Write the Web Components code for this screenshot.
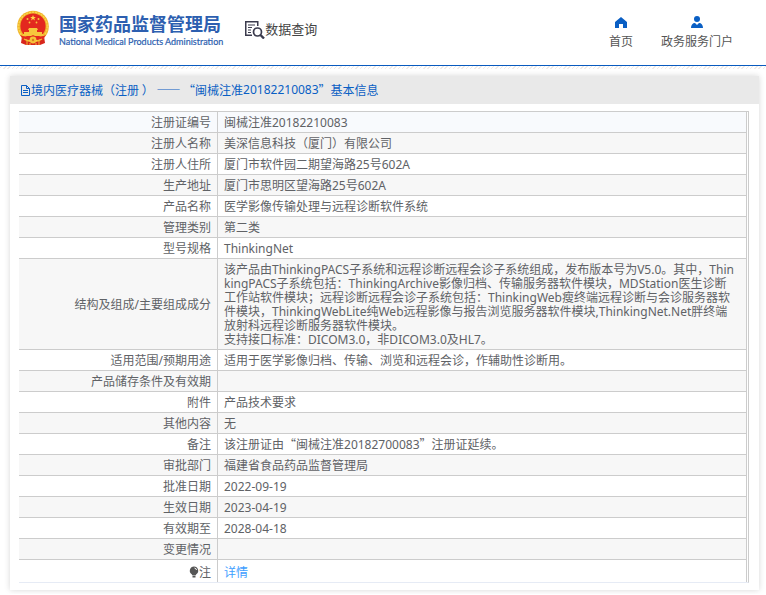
<!DOCTYPE html>
<html lang="zh-CN">
<head>
<meta charset="utf-8">
<title>国家药品监督管理局 数据查询</title>
<style>
html { background: #fff; }
body { margin: 0; font: 12px/14px "Noto Sans", "Noto Sans CJK SC", sans-serif; color: #606266; }
</style>
</head>
<body>
<site-header></site-header>
<record-card></record-card>

<template id="t-header">
<style>
:host { display: block; }
header { display: flex; align-items: flex-start; height: 65px; border-bottom: 1px solid #0a5bbf; box-sizing: content-box; }
.strip { height: 3px; background: repeating-linear-gradient(135deg, #fff 0 1px, #f0ebe8 1px 2px, #fff 2px 3px); }
.brand { display: flex; margin: 10px 0 0 16px; gap: 9px; color: #2d5fb0; text-decoration: none; }
.brand svg { display: block; width: 34px; height: 36px; }
.names { display: flex; flex-direction: column; }
.zh { font: bold 18px/26px "Noto Sans CJK SC", sans-serif; white-space: nowrap; }
.en { font: 9px/11px "Lato", sans-serif; white-space: nowrap; -webkit-text-stroke: 0.2px; }
.query { display: flex; align-items: center; margin: 19px 0 0 22px; color: #444; font: 13px/20px "Noto Sans CJK SC", sans-serif; white-space: nowrap; }
nav { margin-left: auto; display: flex; gap: 28px; padding: 15px 33px 0 0; }
</style>
<header>
  <a class="brand" href="#">
    <svg viewBox="0 0 34 36" aria-hidden="true">
      <path d="M6 26h22l1 7-5 2H10l-5-2z" fill="#d8261c"/>
      <circle cx="17" cy="16.500" r="15.800" fill="#f0b429"/>
      <circle cx="17" cy="16.500" r="14.300" fill="none" stroke="#f9d24c" stroke-width="1.500" stroke-dasharray="2 1"/>
      <circle cx="17" cy="16" r="12.600" fill="#e3281f"/>
      <path d="M17 5l.8 2h2.100l-1.700 1.300.7 2.100-1.900-1.300-1.900 1.300.7-2.100L14.100 7h2.100z" fill="#ffd94a"/>
      <g fill="#f7c63c"><circle cx="11.500" cy="9" r="1"/><circle cx="22.500" cy="9" r="1"/><circle cx="13.500" cy="12.500" r=".9"/><circle cx="20.500" cy="12.500" r=".9"/>
      <path d="M13 18h8l1 2h-1v2h5v2h1v2H7v-2h1v-2h5v-2h-1z"/></g>
      <path d="M4 25q6 2 9 2l4-2 4 2q3 0 9-2l-3 4-6 1-4-1-4 1-6-1z" fill="#e3281f"/>
      <circle cx="17" cy="30" r="3.400" fill="#f5c33a"/><circle cx="17" cy="30" r="1.200" fill="#dc7b20"/>
      <path d="M8 29l3 1v5M26 29l-3 1v5M14 33v2M20 33v2" stroke="#f2b632" fill="none"/>
    </svg>
    <span class="names"><span class="zh">国家药品监督管理局</span><span class="en">National Medical Products Administration</span></span>
  </a>
  <div class="query">
    <svg width="20" height="20" viewBox="0 0 20 20" fill="none" stroke="#3b3b4d" aria-hidden="true">
      <path d="M7 16.250H.750V2.750h12V7" stroke-width="1.500"/>
      <path d="M3 6h7M3 8.500h4M3 11h3M3 13.500h3"/>
      <circle cx="12.500" cy="13" r="4" stroke-width="1.700"/><path d="M15.500 16l3.500 3.500" stroke-width="2.400"/>
    </svg><span>数据查询</span>
  </div>
  <nav>
    <nav-link label="首页"><svg slot="icon" width="14" height="14" viewBox="0 0 14 14"><path d="M7 2L1 7v6h4V9h4v4h4V7z" fill="#0a5fc4"/></svg></nav-link>
    <nav-link label="政务服务门户"><svg slot="icon" width="14" height="14" viewBox="0 0 14 14"><circle cx="7" cy="4" r="3" fill="#0a5fc4"/><path d="M1 13c0-3 1.500-5 4-5l2 2 2-2c2.500 0 4 2 4 5z" fill="#0a5fc4"/></svg></nav-link>
  </nav>
</header>
<div class="strip"></div>
</template>

<template id="t-link">
<style>
:host { display: block; }
a { display: flex; flex-direction: column; align-items: center; gap: 6px; color: #555; text-decoration: none; white-space: nowrap; }
::slotted(svg) { display: block; }
</style>
<a href="#"><slot name="icon"></slot><span></span></a>
</template>

<template id="t-card">
<style>
:host { display: block; margin: 7px 7px 4px 10px; background: #fff; box-shadow: 0 0 6px rgba(0,0,0,.16); padding-bottom: 7px; }
.cjk { font-family: "Noto Sans CJK SC", sans-serif; line-height: 0; }
h1 { display: flex; align-items: center; margin: 0 0 7px; height: 28px; padding-left: 10px; background: #e9e9e9; color: #0a5fc4; font-size: 12px; font-weight: normal; white-space: pre; }
table { width: calc(100% - 19px); margin-left: 9px; border-collapse: separate; border-spacing: 0; border-top: 1px solid #ccc; border-right: 1px solid #ccc; border-bottom: 1px solid #e6ebf5; table-layout: fixed; padding-right: 1px; }
th, td { border-right: 1px solid #ccc; border-bottom: 1px solid #ccc; padding: 4px 6px 2px; font-weight: normal; line-height: 14px; height: 14px; word-break: break-all; }
th { text-align: right; width: 186px; }
td { text-align: left; padding-right: 9px; }
tr:nth-child(even) { background: #f7f7f7; }
tr:first-child { background: #f8fafd; }
tr:last-child > * { border-bottom: 0; padding: 6px 6px 2px; }
a { color: #409eff; text-decoration: none; }
</style>
<h1><svg width="11" height="12" viewBox="0 0 11 12" fill="none" stroke="#0a5fc4" aria-hidden="true"><path d="M1.500 1.500h5l3 3v7h-8zM6.500 1.500v3h3M3 6.500h5M3 8.500h5"/></svg><span class="cjk">境内医疗器械（注册 ） —— “闽械注准</span>20182210083<span class="cjk">”基本信息</span></h1>
<table><tbody></tbody></table>
</template>

<script>
const stamp = (el, id) => {
  const root = el.attachShadow({ mode: 'open' });
  root.append(document.getElementById(id).content.cloneNode(true));
  return root;
};
const records = [
  ['注册证编号', '闽械注准20182210083'],
  ['注册人名称', '美深信息科技（厦门）有限公司'],
  ['注册人住所', '厦门市软件园二期望海路25号602A'],
  ['生产地址', '厦门市思明区望海路25号602A'],
  ['产品名称', '医学影像传输处理与远程诊断软件系统'],
  ['管理类别', '第二类'],
  ['型号规格', 'ThinkingNet'],
  ['结构及组成/主要组成成分', '该产品由ThinkingPACS子系统和远程诊断远程会诊子系统组成，发布版本号为V5.0。其中，ThinkingPACS子系统包括：ThinkingArchive影像归档、传输服务器软件模块，MDStation医生诊断工作站软件模块；远程诊断远程会诊子系统包括：ThinkingWeb瘦终端远程诊断与会诊服务器软件模块，ThinkingWebLite纯Web远程影像与报告浏览服务器软件模块,ThinkingNet.Net胖终端放射科远程诊断服务器软件模块。<br>支持接口标准：DICOM3.0，非DICOM3.0及HL7。'],
  ['适用范围/预期用途', '适用于医学影像归档、传输、浏览和远程会诊，作辅助性诊断用。'],
  ['产品储存条件及有效期', ''],
  ['附件', '产品技术要求'],
  ['其他内容', '无'],
  ['备注', '该注册证由<span class="cjk">“</span>闽械注准20182700083<span class="cjk">”</span>注册证延续。'],
  ['审批部门', '福建省食品药品监督管理局'],
  ['批准日期', '2022-09-19'],
  ['生效日期', '2023-04-19'],
  ['有效期至', '2028-04-18'],
  ['变更情况', ''],
  ['<svg width="10" height="12" viewBox="0 0 10 12" style="vertical-align:-1px" aria-hidden="true"><path d="M5 .5a4.200 4.200 0 0 1 2.300 7.700L6.500 9.500h-3L2.700 8.200A4.200 4.200 0 0 1 5 .5zM3.500 10h3v1.500h-3z" fill="#555"/><path d="M5.500 2q1.800.3 2 2" stroke="#fff" fill="none"/></svg>注', '<a href="#">详情</a>'],
];
customElements.define('nav-link', class extends HTMLElement {
  constructor() { super(); stamp(this, 't-link'); }
  connectedCallback() { this.shadowRoot.querySelector('span').textContent = this.getAttribute('label'); }
});
customElements.define('site-header', class extends HTMLElement {
  constructor() { super(); stamp(this, 't-header'); }
});
customElements.define('record-card', class extends HTMLElement {
  constructor() {
    super();
    stamp(this, 't-card').querySelector('tbody').innerHTML =
      records.map(([k, v]) => `<tr><th scope="row">${k}</th><td>${v}</td></tr>`).join('');
  }
});
</script>
</body>
</html>
